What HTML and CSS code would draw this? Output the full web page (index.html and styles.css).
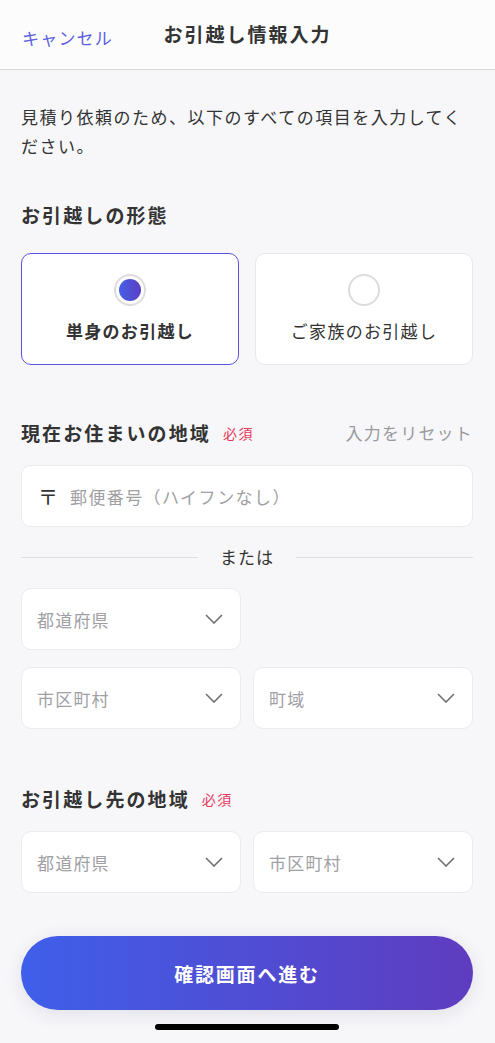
FILE: index.html
```html
<!DOCTYPE html>
<html lang="ja">
<head>
   <meta charset="UTF-8">
   <meta name="viewport" content="width=device-width, initial-scale=1.0">
   <link rel="stylesheet" href="styles.css">
</head>
<body>
   <div class="header">
      <span class="cancel">キャンセル</span>
      <span class="title">お引越し情報入力</span>
   </div>
   <div class="main">
      <p class="description">見積り依頼のため、以下のすべての項目を入力してください。</p>

      <div class="section-title">お引越しの形態</div>
      <div class="type-cards">
         <div class="type-card selected">
            <span class="radio"><span class="radio-dot"></span></span>
            <span class="type-label">単身のお引越し</span>
         </div>
         <div class="type-card">
            <span class="radio"></span>
            <span class="type-label">ご家族のお引越し</span>
         </div>
      </div>

      <div class="section-title row-title">
         <span>現在お住まいの地域</span>
         <span class="required">必須</span>
         <span class="reset">入力をリセット</span>
      </div>
      <div class="input-field">
         <span class="postal-mark">〒</span>
         <span class="placeholder">郵便番号（ハイフンなし）</span>
      </div>
      <div class="divider"><span>または</span></div>
      <div class="select-grid">
         <div class="select-box"><span>都道府県</span><svg class="chevron" viewBox="0 0 18 10"><path d="M1 1l8 8 8-8"/></svg></div>
      </div>
      <div class="select-grid second">
         <div class="select-box"><span>市区町村</span><svg class="chevron" viewBox="0 0 18 10"><path d="M1 1l8 8 8-8"/></svg></div>
         <div class="select-box"><span>町域</span><svg class="chevron" viewBox="0 0 18 10"><path d="M1 1l8 8 8-8"/></svg></div>
      </div>

      <div class="section-title row-title dest-title">
         <span>お引越し先の地域</span>
         <span class="required">必須</span>
      </div>
      <div class="select-grid">
         <div class="select-box"><span>都道府県</span><svg class="chevron" viewBox="0 0 18 10"><path d="M1 1l8 8 8-8"/></svg></div>
         <div class="select-box"><span>市区町村</span><svg class="chevron" viewBox="0 0 18 10"><path d="M1 1l8 8 8-8"/></svg></div>
      </div>

      <button class="next-btn">確認画面へ進む</button>
      <div class="home-bar"></div>
   </div>
</body>
</html>
```

FILE: styles.css
```css
body {
   font-family: "Noto Sans CJK JP", "Noto Sans", sans-serif;
   background-color: #f7f7fa;
   color: #333;
   margin: 0;
   padding: 0;
}
.header {
   position: relative;
   height: 69px;
   display: flex;
   align-items: center;
   justify-content: center;
   background-color: #fcfcfc;
   border-bottom: 1px solid #d9d9dc;
}
.cancel {
   position: absolute;
   left: 22px;
   top: 24px;
   font-size: 17px;
   line-height: 28px;
   letter-spacing: 1.2px;
   color: #5b5fe2;
}
.title {
   font-size: 19px;
   font-weight: bold;
   letter-spacing: 2px;
   line-height: 28px;
   margin-top: -1px;
}
.main {
   padding: 0 22px 0 21px;
}
.description {
   margin: 32px 0 0;
   font-size: 17px;
   line-height: 29px;
   letter-spacing: 1.5px;
}
.section-title {
   margin-top: 41px;
   font-size: 19px;
   font-weight: bold;
   line-height: 28px;
   letter-spacing: 2.1px;
}
.type-cards {
   display: grid;
   grid-template-columns: 1fr 1fr;
   gap: 16px;
   margin-top: 24px;
}
.type-card {
   display: flex;
   flex-direction: column;
   align-items: center;
   box-sizing: border-box;
   height: 112px;
   padding-top: 20px;
   background-color: #fff;
   border: 1px solid #e8e8ec;
   border-radius: 10px;
}
.type-card.selected {
   border-color: #5753dd;
}
.radio {
   display: flex;
   align-items: center;
   justify-content: center;
   width: 32px;
   height: 32px;
   box-sizing: border-box;
   border: 2px solid #dcdcdf;
   border-radius: 50%;
   background-color: #fff;
}
.radio-dot {
   width: 22px;
   height: 22px;
   border-radius: 50%;
   background: linear-gradient(90deg, #4560e6, #5b3fc4);
}
.type-label {
   margin-top: 13px;
   font-size: 17px;
   line-height: 24px;
   letter-spacing: 1.3px;
}
.selected .type-label {
   font-weight: bold;
}
.row-title {
   display: flex;
   align-items: center;
   margin-top: 54px;
}
.required {
   margin-left: 12px;
   font-size: 14px;
   font-weight: normal;
   letter-spacing: 1.5px;
   color: #e6395b;
}
.reset {
   margin-left: auto;
   font-size: 17px;
   font-weight: normal;
   letter-spacing: 1.2px;
   color: #9a9a9e;
}
.input-field {
   display: flex;
   align-items: center;
   height: 62px;
   box-sizing: border-box;
   margin-top: 18px;
   padding: 0 16px;
   background-color: #fff;
   border: 1px solid #ebebee;
   border-radius: 10px;
}
.postal-mark {
   font-size: 20px;
   color: #333;
   margin-right: 12px;
}
.placeholder {
   font-size: 17px;
   letter-spacing: 1.4px;
   color: #a0a0a4;
}
.divider {
   display: flex;
   align-items: center;
   margin-top: 18px;
   font-size: 17px;
   line-height: 24px;
   letter-spacing: 1px;
   color: #333;
}
.divider::before, .divider::after {
   content: "";
   flex: 1;
   height: 1px;
   background-color: #dedee2;
}
.divider span {
   padding: 0 22px;
}
.select-grid {
   display: grid;
   grid-template-columns: 1fr 1fr;
   gap: 12px;
   margin-top: 19px;
}
.select-grid.second {
   margin-top: 17px;
}
.select-box {
   display: flex;
   align-items: center;
   justify-content: space-between;
   height: 62px;
   box-sizing: border-box;
   padding: 0 17px 0 15px;
   background-color: #fff;
   border: 1px solid #ebebee;
   border-radius: 10px;
   font-size: 17px;
   letter-spacing: 1.2px;
   color: #a0a0a4;
}
.chevron {
   width: 18px;
   height: 10px;
   fill: none;
   stroke: #6f6f73;
   stroke-width: 1.6;
}
.dest-title {
   margin-top: 56px;
}
.dest-title + .select-grid {
   margin-top: 18px;
}
.next-btn {
   display: block;
   width: 100%;
   height: 74px;
   margin-top: 43px;
   border: none;
   border-radius: 37px;
   background: linear-gradient(90deg, #3f5fea, #5f3cbf);
   box-shadow: 0 4px 18px rgba(60, 60, 90, 0.12);
   color: #fff;
   font-family: inherit;
   font-size: 19px;
   font-weight: bold;
   letter-spacing: 1.8px;
   cursor: pointer;
}
.home-bar {
   width: 184px;
   height: 6px;
   margin: 14px 0 0 134px;
   border-radius: 3px;
   background-color: #000;
}
```
